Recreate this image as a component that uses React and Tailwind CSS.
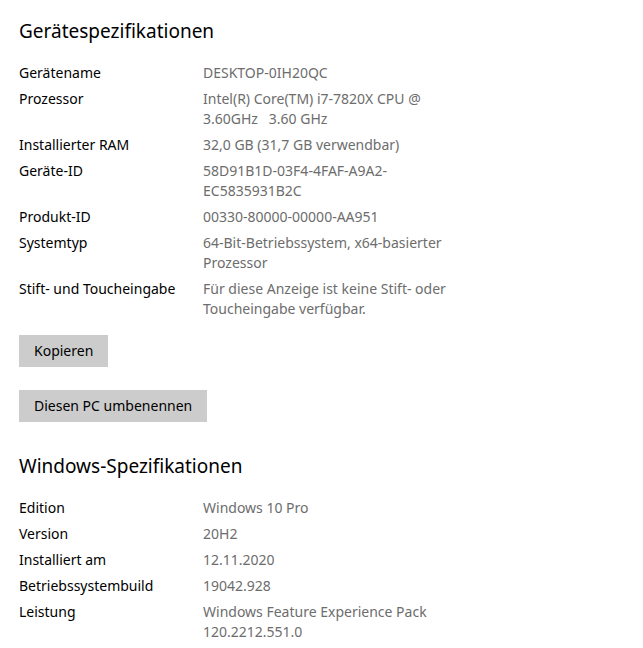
const device = [
  { label: 'Gerätename', value: ['DESKTOP-0IH20QC'] },
  { label: 'Prozessor', value: ['Intel(R) Core(TM) i7-7820X CPU @', '3.60GHz   3.60 GHz'] },
  { label: 'Installierter RAM', value: ['32,0 GB (31,7 GB verwendbar)'] },
  { label: 'Geräte-ID', value: ['58D91B1D-03F4-4FAF-A9A2-', 'EC5835931B2C'] },
  { label: 'Produkt-ID', value: ['00330-80000-00000-AA951'] },
  { label: 'Systemtyp', value: ['64-Bit-Betriebssystem, x64-basierter', 'Prozessor'] },
  { label: 'Stift- und Toucheingabe', value: ['Für diese Anzeige ist keine Stift- oder', 'Toucheingabe verfügbar.'] },
]

const windows = [
  { label: 'Edition', value: ['Windows 10 Pro'] },
  { label: 'Version', value: ['20H2'] },
  { label: 'Installiert am', value: ['12.11.2020'] },
  { label: 'Betriebssystembuild', value: ['19042.928'] },
  { label: 'Leistung', value: ['Windows Feature Experience Pack', '120.2212.551.0'] },
]

function SpecList({ items }) {
  return (
    <dl className="flex flex-col gap-[6px]">
      {items.map((item) => (
        <div key={item.label} className="flex">
          <dt className="w-[184px] shrink-0 text-[#000]">{item.label}</dt>
          <dd className="text-[#6d6d6d]">
            {item.value.map((line) => (
              <span key={line} className="block whitespace-pre">{line}</span>
            ))}
          </dd>
        </div>
      ))}
    </dl>
  )
}

function Button({ children }) {
  return (
    <button className="h-[32px] bg-[#cccccc] px-[15px] text-[14px] text-[#000]">
      {children}
    </button>
  )
}

export default function App() {
  return (
    <div className="min-h-[648px] bg-white pl-[19px] pt-[18px] text-[14px] leading-[20px] font-['Noto_Sans',sans-serif]">
      <section aria-label="Gerätespezifikationen">
        <h2 className="mb-[19px] text-[19px] leading-[26px] text-[#000]">Gerätespezifikationen</h2>
        <SpecList items={device} />
        <div className="mt-[16px] flex flex-col items-start gap-[23px]">
          <Button>Kopieren</Button>
          <Button>Diesen PC umbenennen</Button>
        </div>
      </section>

      <section aria-label="Windows-Spezifikationen" className="mt-[31px]">
        <h2 className="mb-[19px] text-[19px] leading-[26px] text-[#000]">Windows-Spezifikationen</h2>
        <SpecList items={windows} />
      </section>
    </div>
  )
}
